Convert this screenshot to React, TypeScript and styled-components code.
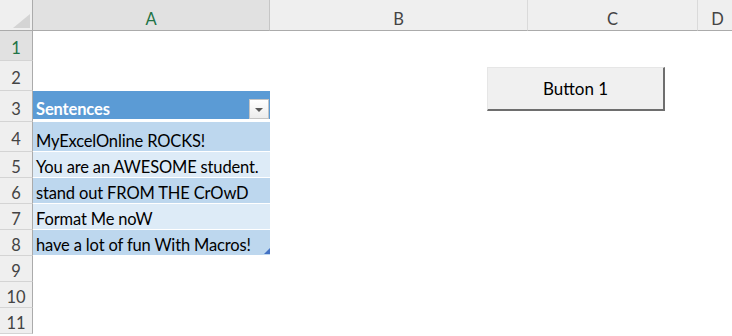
import React from "react";
import styled, { createGlobalStyle, css } from "styled-components";

const Global = createGlobalStyle`
  html, body { margin: 0; padding: 0; background: #ffffff; overflow: hidden; }
  body { font-family: Lato, "Liberation Sans", sans-serif; }
`;

const Sheet = styled.div`
  position: relative;
  width: 732px;
  height: 336px;
  overflow: hidden;
  display: grid;
  grid-template-columns: 33px 237px 258px 170px 40px;
  grid-template-rows: 31px 30px 30px 31px 30px repeat(7, 26px);
  font-family: Lato, "Liberation Sans", sans-serif;
  font-size: 16.5px;
`;

const Corner = styled.div`
  box-sizing: border-box;
  background: #efefef;
  border-right: 1px solid #ababab;
  border-bottom: 1px solid #ababab;
  display: flex;
  align-items: flex-end;
  justify-content: flex-end;
  padding: 0 2px 2px 0;
`;

const CornerTriangle = styled.div`
  width: 0;
  height: 0;
  border-left: 17px solid transparent;
  border-bottom: 14px solid #d4d4d4;
`;

const ColHeader = styled.div<{ $selected?: boolean }>`
  box-sizing: border-box;
  background: ${(p) => (p.$selected ? "#e1e1e1" : "#efefef")};
  color: ${(p) => (p.$selected ? "#217346" : "#444444")};
  border-right: 1px solid ${(p) => (p.$selected ? "#c6c6c6" : "#dadada")};
  border-bottom: 1px solid #ababab;
  display: flex;
  align-items: center;
  justify-content: center;
  padding-top: 8px;
`;

const RowHeader = styled.div<{ $selected?: boolean }>`
  box-sizing: border-box;
  background: ${(p) => (p.$selected ? "#e1e1e1" : "#efefef")};
  color: ${(p) => (p.$selected ? "#217346" : "#444444")};
  border-right: 1px solid #ababab;
  border-bottom: 1px solid #d4d4d4;
  display: flex;
  align-items: center;
  justify-content: center;
  padding-top: 5px;
`;

const Cell = styled.div`
  box-sizing: border-box;
  background: #ffffff;
`;

type Band = "head" | "dark" | "light";

const TableCell = styled.div<{ $band: Band; $last?: boolean }>`
  box-sizing: border-box;
  position: relative;
  display: flex;
  align-items: flex-end;
  justify-content: space-between;
  padding: 0 1px 0 3px;
  color: #000000;
  line-height: 20px;
  letter-spacing: -0.15px;
  white-space: nowrap;
  ${(p) =>
    p.$band === "head"
      ? css`
          background: #5b9bd5;
          color: #ffffff;
          font-weight: 700;
          border-bottom: 3px solid #ffffff;
        `
      : css`
          background: ${p.$band === "dark" ? "#bdd7ee" : "#ddebf7"};
          border-bottom: 1px solid #ffffff;
        `}
  ${(p) =>
    p.$last &&
    css`
      &::after {
        content: "";
        position: absolute;
        right: 0;
        bottom: 1px;
        width: 0;
        height: 0;
        border-left: 6px solid transparent;
        border-bottom: 6px solid #4472c4;
      }
    `}
`;

const HeadLabel = styled.span``;

const FilterButton = styled.div`
  box-sizing: border-box;
  width: 20px;
  height: 20px;
  background: linear-gradient(#ffffff, #ececec);
  border: 1px solid #c4c4c4;
  display: flex;
  align-items: center;
  justify-content: center;
`;

const FilterArrow = styled.div`
  width: 0;
  height: 0;
  margin-top: 1px;
  border-left: 4px solid transparent;
  border-right: 4px solid transparent;
  border-top: 4px solid #595959;
`;

const FormButton = styled.div`
  position: absolute;
  left: 487px;
  top: 67px;
  width: 178px;
  height: 44px;
  box-sizing: border-box;
  background: #f0f0f0;
  border-top: 1px solid #e6e6e6;
  border-left: 1px solid #e6e6e6;
  border-right: 2px solid #6e6e6e;
  border-bottom: 2px solid #6e6e6e;
  display: flex;
  align-items: center;
  justify-content: center;
  color: #000000;
  font-size: 17px;
`;

const sentences = [
  "MyExcelOnline ROCKS!",
  "You are an AWESOME student.",
  "stand out FROM THE CrOwD",
  "Format Me noW",
  "have a lot of fun With Macros!",
];

export default function App() {
  const rows = Array.from({ length: 11 }, (_, i) => i + 1);
  return (
    <>
      <Global />
      <Sheet>
        <Corner>
          <CornerTriangle />
        </Corner>
        <ColHeader $selected>A</ColHeader>
        <ColHeader>B</ColHeader>
        <ColHeader>C</ColHeader>
        <ColHeader>D</ColHeader>
        {rows.map((r) => {
          let aCell: React.ReactNode = <Cell />;
          if (r === 3) {
            aCell = (
              <TableCell $band="head">
                <HeadLabel>Sentences</HeadLabel>
                <FilterButton>
                  <FilterArrow />
                </FilterButton>
              </TableCell>
            );
          } else if (r >= 4 && r <= 8) {
            aCell = (
              <TableCell $band={r % 2 === 0 ? "dark" : "light"} $last={r === 8}>
                {sentences[r - 4]}
              </TableCell>
            );
          }
          return (
            <React.Fragment key={r}>
              <RowHeader $selected={r === 1}>{r}</RowHeader>
              {aCell}
              <Cell />
              <Cell />
              <Cell />
            </React.Fragment>
          );
        })}
        <FormButton>Button 1</FormButton>
      </Sheet>
    </>
  );
}
